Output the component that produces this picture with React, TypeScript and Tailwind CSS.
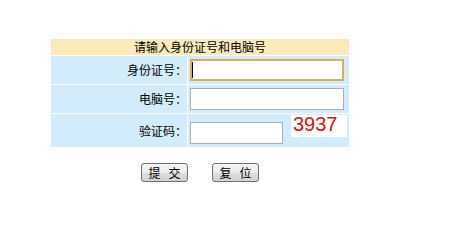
import React from "react";

export default function App() {
  return (
    <div className="w-[450px] h-[219px] bg-white text-black font-['Noto_Sans_CJK_SC','Noto_Sans',sans-serif] pt-[38px]">
      <div className="ml-[50px] w-[300px] bg-white p-[1px] flex flex-col gap-[1px]">
        <div className="h-[16px] bg-[#fbebbc] text-[12px] leading-[16px] text-center">
          请输入身份证号和电脑号
        </div>
        <div className="flex gap-[1px] h-[28px]">
          <div className="w-[136px] bg-[#d3ecfc] flex items-center justify-end pr-0 text-[12px]">
            身份证号：
          </div>
          <div className="flex-1 bg-[#d3ecfc] flex items-center pl-[2px]">
            <div className="relative">
              <input
                type="text"
                className="block w-[154px] h-[22px] border-2 border-[#dcab5c] bg-white outline-none px-[2px] text-[12px]"
              />
              <span className="absolute left-[2px] top-[3px] w-[1px] h-[16px] bg-black" />
            </div>
          </div>
        </div>
        <div className="flex gap-[1px] h-[28px]">
          <div className="w-[136px] bg-[#d3ecfc] flex items-center justify-end pr-0 text-[12px]">
            电脑号：
          </div>
          <div className="flex-1 bg-[#d3ecfc] flex items-center pl-[2px]">
            <input
              type="text"
              className="block w-[154px] h-[22px] border border-[#abadb3] bg-white outline-none px-[2px] text-[12px]"
            />
          </div>
        </div>
        <div className="flex gap-[1px] h-[33px]">
          <div className="w-[136px] bg-[#d3ecfc] flex items-center justify-end pr-0 text-[12px]">
            验证码：
          </div>
          <div className="flex-1 bg-[#d3ecfc] flex items-start pl-[2px]">
            <input
              type="text"
              className="block mt-[8px] w-[93px] h-[22px] border border-[#abadb3] bg-white outline-none px-[2px] text-[12px]"
            />
            <div className="ml-[8px] mt-[1px] w-[56px] h-[22px] bg-white pl-[2px] font-['Liberation_Sans',Arial,sans-serif] text-[20px] leading-[18px] text-[#cc1414]">
              3937
            </div>
          </div>
        </div>
      </div>
      <div className="ml-[50px] w-[300px] mt-[15px] flex justify-center gap-[24px]">
        <button
          type="button"
          className="w-[47px] h-[19px] border border-[#707070] rounded-[3px] bg-[linear-gradient(#f4f4f4_0%,#ececec_50%,#dedede_51%,#d2d2d2_100%)] text-[12px] leading-none flex items-center justify-center gap-[8px]"
        >
          <span>提</span>
          <span>交</span>
        </button>
        <button
          type="button"
          className="w-[47px] h-[19px] border border-[#707070] rounded-[3px] bg-[linear-gradient(#f4f4f4_0%,#ececec_50%,#dedede_51%,#d2d2d2_100%)] text-[12px] leading-none flex items-center justify-center gap-[8px]"
        >
          <span>复</span>
          <span>位</span>
        </button>
      </div>
    </div>
  );
}
